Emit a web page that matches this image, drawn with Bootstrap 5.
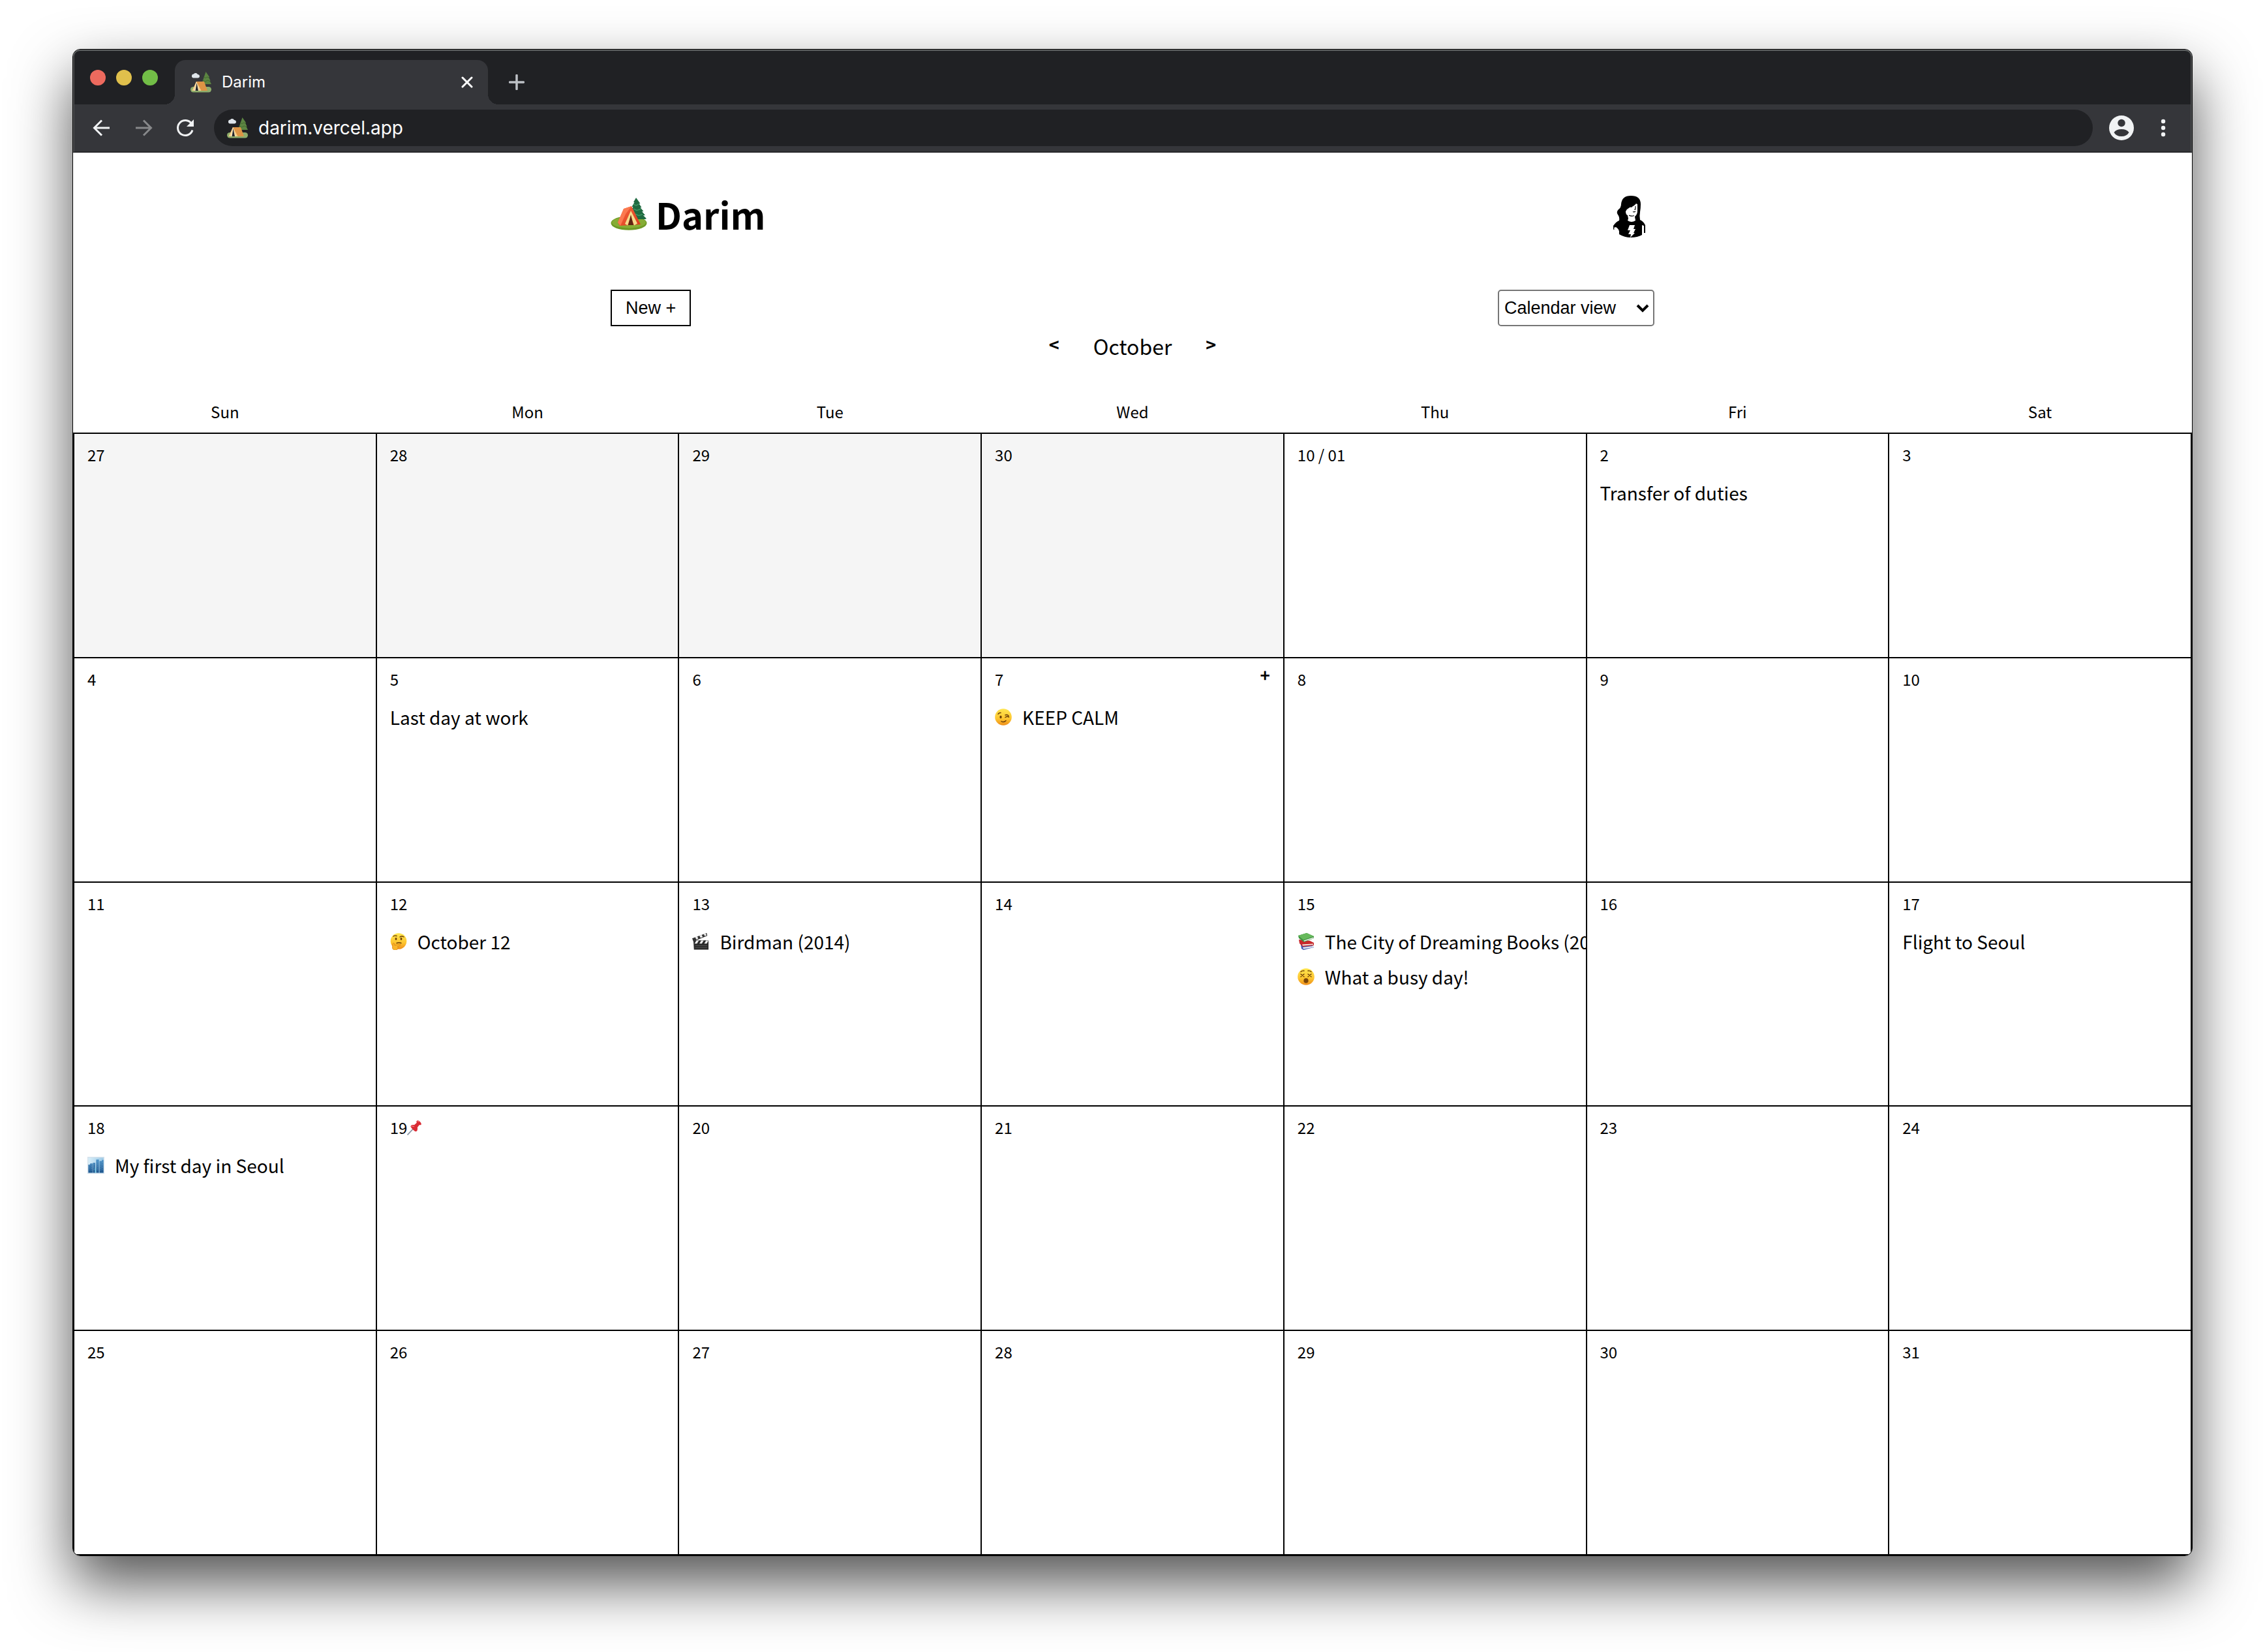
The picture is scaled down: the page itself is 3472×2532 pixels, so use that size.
<!DOCTYPE html>
<html lang="en">
<head>
<meta charset="utf-8">
<meta name="viewport" content="width=device-width, initial-scale=1">
<title>Darim</title>
<link href="https://cdn.jsdelivr.net/npm/bootstrap@5.3.0/dist/css/bootstrap.min.css" rel="stylesheet">
<style>
body{background:#fff;color:#000;font-family:"Noto Sans CJK KR","Noto Sans",sans-serif;padding:75px 111px 147px}
.app-window{border:1px solid #000;border-radius:12px;background:#fff;box-shadow:0 42px 90px rgba(0,0,0,.68)}
.chrome-top{background:#202124;border-radius:11px 11px 0 0;box-shadow:inset 0 2px 0 #5d6061,inset 2px 0 0 #4b4c4e,inset -2px 0 0 #4b4c4e;font-family:Inter,Roboto,sans-serif;color:#fff}
.tab-strip{height:84px;padding:0 26px}
.light{width:24px;height:24px;border-radius:50%}
.light-close{background:#ed6a5e}.light-min{background:#e0c04c}.light-max{background:#72be47}
.lights{gap:16px;padding-bottom:29px}
.site-tab{width:480px;height:68px;margin-left:26px;padding:0 23px 0 24px;border-radius:16px 16px 0 0;background:#35363a;position:relative;font-size:24px;line-height:32px}
.site-tab::before,.site-tab::after{content:"";position:absolute;bottom:0;width:16px;height:16px}
.site-tab::before{left:-16px;background:radial-gradient(circle at 0 0,transparent 16px,#35363a 16px)}
.site-tab::after{right:-16px;background:radial-gradient(circle at 100% 0,transparent 16px,#35363a 16px)}
.bare{border:0;background:none;padding:0;color:inherit;line-height:1;display:flex;align-items:center;justify-content:center}
.new-tab{margin-left:32px;height:68px}
.tool-bar{height:74px;background:#35363a;border-bottom:2px solid #28292c;padding:0 38px 0 26px;border-left:2px solid #4b4c4e;border-right:2px solid #4b4c4e}
.omnibox{height:56px;border-radius:28px;background:#202124;padding-left:20px;gap:16px;margin:0 24px 0 28px}
.omnibox input{background:none;border:0;outline:0;color:#fff;font-size:28px;line-height:40px;height:44px;padding:0}
.nav-tools{gap:32px}
.menu-btn{margin-left:40px}
.page-col{width:1600px;max-width:100%}
.site-head{padding-top:54px}
.site-title{font-size:56px;line-height:80px;gap:13px;font-weight:700;margin:0}
.avatar-btn{margin:8px 10px 0 0}
.controls{padding-top:76px}
.ctl{font-family:"Liberation Sans",Arial,sans-serif;font-size:27px;line-height:32px;height:56px;color:#000}
.btn-new{border:2px solid #000;border-radius:0;padding:0 21px;background:#fff}
.view-pick{width:240px;border:2px solid #767676;border-radius:5px;padding:0 40px 0 8px;background-position:right 6px center;background-size:20px 20px;background-image:url("data:image/svg+xml,%3Csvg xmlns='http://www.w3.org/2000/svg' viewBox='0 0 20 20'%3E%3Cpath d='M2 6l8 8 8-8' fill='none' stroke='%23000' stroke-width='4'/%3E%3C/svg%3E")}
.month-nav{padding-top:6px;gap:48px}
.month-name{font-size:32px;line-height:48px;font-weight:400;margin:0}
.step-btn{font-size:27px;font-weight:700;width:24px;height:42px}
.cal{table-layout:fixed;width:100%;border-collapse:collapse}
.cal th{height:110px;padding:0 0 14px;vertical-align:bottom;text-align:center;font-size:24px;line-height:36px;font-weight:400}
.cal td{border:2px solid #000;padding:14px 0 0 20px;vertical-align:top;overflow:hidden}
.cal td.other{background:#f5f5f5}
.cell-body{min-height:300px}
.day-row{font-size:24px;line-height:36px;padding-right:20px;margin-bottom:13px}
.ev{font-size:28px;line-height:54px;color:#000;text-decoration:none;white-space:nowrap;gap:16px}
.add-btn{font-size:26px;font-weight:700;height:22px}
svg{display:block;flex:none}
</style>
</head>
<body class="d-flex flex-column min-vh-100">
<svg width="0" height="0" class="position-absolute" aria-hidden="true">
<defs>
<linearGradient id="gy" x1="0" y1="0" x2="0" y2="1"><stop offset="0" stop-color="#ffe650"/><stop offset=".6" stop-color="#fdc52f"/><stop offset="1" stop-color="#ee8d1a"/></linearGradient>
<linearGradient id="gt" x1="0" y1="0" x2="1" y2="1"><stop offset="0" stop-color="#f9683f"/><stop offset="1" stop-color="#d93a1c"/></linearGradient>
<linearGradient id="gs" x1="0" y1="0" x2="1" y2="0"><stop offset="0" stop-color="#d8eef9"/><stop offset="1" stop-color="#9cc9e6"/></linearGradient>
<linearGradient id="gb" x1="0" y1="0" x2="0" y2="1"><stop offset="0" stop-color="#4d93c8"/><stop offset="1" stop-color="#1c548c"/></linearGradient>
<symbol id="favicon" viewBox="0 0 32 32">
<rect x="0" y="23" width="32" height="8.500" rx="4.200" fill="#8fae6c"/>
<path d="M23.500 0L17 19h15L29.500 14l1-.5-2.500-5 1-.5z" fill="#5c8542"/><path d="M20 8l3 1.500 3-1.500 3 1.500M18.500 13l4 2 4-2 4 2" stroke="#43692f" fill="none"/>
<path d="M2 6.500a3 3 0 013-3 3.500 3.500 0 016 .5 2.800 2.800 0 013 2.500A2.800 2.800 0 0111.500 9.500h-7A2.500 2.500 0 012 6.500z" fill="#dfe5ea"/>
<path d="M9 15h12l5 14H3z" fill="#de9445"/><path d="M9 15l-6.500 14h14z" fill="#f7d08a"/><path d="M9 15L6 29h7z" fill="#fff0cd"/><path d="M9.500 17l-2 12h4.500z" fill="#26272b"/>
</symbol>
<symbol id="camp" viewBox="0 0 56 50">
<ellipse cx="28" cy="39" rx="27.500" ry="10.800" fill="#6f9a26"/><ellipse cx="28" cy="38" rx="26" ry="8.500" fill="#86ad35"/>
<path d="M39 0l-4 7 1.500 0-4 7 2 0-3.500 6 2 0-3 6v7h23l2-1-5-5 3 0-5-6 2.500 0-5-6 2 0-4-6 2 0z" fill="#1f6a41"/>
<path d="M35 10l4 2 4-2M35 17l5 2.500 6-2M38 25l5 2.500 6-2" stroke="#3f9463" stroke-width="1.500" fill="none"/>
<path d="M20 17l12-4 14 28-32 2-3-5z" fill="url(#gt)"/><path d="M20 17l12-4-9 12-8 18-4-5z" fill="#fb7a50"/>
<path d="M31 20l-9 20 4 2.500 5-14 5 14 5-3z" fill="#f5dc8c"/><path d="M31 26l-4 16h8z" fill="#5f2413"/>
</symbol>
<symbol id="wink" viewBox="0 0 26 26"><circle cx="13" cy="13" r="12.800" fill="url(#gy)"/><g fill="none" stroke="#6b3d07" stroke-width="1.500" stroke-linecap="round"><path d="M5 8.500Q6 6 9 6.500M16 10q3-1.500 5 1M16 13.500q3-2 5.500-.5M10 19.500q3.500 2.500 7-1"/></g><ellipse cx="9" cy="13" rx="1.600" ry="2.300" fill="#6b3d07"/></symbol>
<symbol id="dizzy" viewBox="0 0 26 26"><circle cx="13" cy="13" r="12.800" fill="url(#gy)"/><path d="M5 9l5 4M10 9l-5 4M16 9l5 4M21 9l-5 4M5 5.500q2-2 5-1.500M16 4q3-.5 5 1.500" fill="none" stroke="#6b3d07" stroke-width="1.400" stroke-linecap="round"/><ellipse cx="13" cy="19" rx="3.600" ry="3.800" fill="#7a4508"/></symbol>
<symbol id="think" viewBox="0 0 26 26"><circle cx="13" cy="12.500" r="12.300" fill="url(#gy)"/><g fill="none" stroke="#6b3d07" stroke-width="1.400" stroke-linecap="round"><path d="M5 5q2-1.500 5-.5M15 6q3-2 6 0M10 15.500q4-1.500 7 0"/></g><ellipse cx="9" cy="9" rx="1.400" ry="2" fill="#6b3d07"/><ellipse cx="17" cy="9" rx="1.400" ry="2" fill="#6b3d07"/><path d="M4 17q1-3 2.500-1l.5 3 8-2q2 .5.500 2l-4 1.500q2 4-2 5.500-5 1-6-3z" fill="#f9b52a" stroke="#d98412" stroke-width=".8"/></symbol>
<symbol id="books" viewBox="0 0 26 26"><path d="M5 18l16-1 4 5-16 4-3-2z" fill="#3b5bb5"/><path d="M8 22l16-2v2L9 24.500z" fill="#e8e8ee"/><path d="M2 10l17 2 6 3v4L8 21l-5-5z" fill="#c8282c"/><path d="M7 17.500l17-1v1.500L8 19.500z" fill="#f1e9e2"/><path d="M1 4L14 0l11 5v3L10 14 2 8z" fill="#3d9440"/><path d="M1 4L14 0l11 5L9 10.500z" fill="#67b95c"/><path d="M9.500 11.500L24.500 6.500V8L10 13z" fill="#efefe8"/></symbol>
<symbol id="clap" viewBox="0 0 28 28"><path d="M2 12h25v15.500H3z" fill="#2b2b2b"/><path d="M0 9L24 0l1 4.500L2 14z" fill="#333"/><path d="M5 7l3.500-1.500 1.500 4-3 1.300zM12 4.500l3.500-1.500 2 3.500-3.500 1.500zM19 2l3-1.200 2 3-3 1.200z" fill="#eee"/><path d="M7 12.500h4l-3 5H4zM15 12.500h4l-3 5h-4zM23 12.500h4l-3 5h-4z" fill="#eee"/><path d="M5 21h20M5 24h20" stroke="#555"/></symbol>
<symbol id="city" viewBox="0 0 28 28"><path d="M0 0h28v28H0z" fill="#d5e2ec"/><path d="M1.500 1.500h25v25h-25z" fill="url(#gs)"/><path d="M1.500 13h3v-2h4v15.500h-7zM9 10h4v16.500H9zM14.500 4.500H19v22h-4.500zM20 7h4v-2h2.500v21.500H20z" fill="url(#gb)"/><path d="M12.500 18H14v8.500h-1.500z" fill="#7fd7ee"/><path d="M4 14v9M7 13v9M11 12v10M17 7v16M22 10v12M24.500 9v12" stroke="#8dbfe2" stroke-width=".8" stroke-dasharray="1 1.800"/></symbol>
<symbol id="pin" viewBox="0 0 23 24"><path d="M9 14L0 23.500" stroke="#8b97a5" stroke-width="1.800"/><path d="M15 1q2-2 5 1t2 5q-1 1-3 .5l-3 4q1 5-2 6.500-2 0-5-3t-4-5q1-3 6-2.500l4-3.500q-1-2 0-3z" fill="#d92b34"/><path d="M16 2q1-1 3 .5M6 10q2-1 5 0" stroke="#f5777a" fill="none" stroke-width="1.300"/></symbol>
</defs></svg>

<div class="app-window flex-grow-1 d-flex flex-column overflow-hidden">
<header class="chrome-top">
  <div class="tab-strip d-flex align-items-end">
    <div class="lights d-flex" aria-hidden="true"><span class="light light-close"></span><span class="light light-min"></span><span class="light light-max"></span></div>
    <div class="site-tab d-flex align-items-center">
      <svg width="32" height="32"><use href="#favicon"/></svg>
      <span class="ms-3 flex-grow-1">Darim</span>
      <button class="bare" type="button" aria-label="Close tab"><svg width="18" height="18" viewBox="0 0 18 18"><path d="M2 2l14 14M16 2L2 16" stroke="#fff" stroke-width="3" stroke-linecap="round"/></svg></button>
    </div>
    <button class="bare new-tab" type="button" aria-label="New tab"><svg width="24" height="24" viewBox="0 0 24 24"><path d="M12 1.500v21M1.500 12h21" stroke="#bdc1c6" stroke-width="3.500" stroke-linecap="round"/></svg></button>
  </div>
  <div class="tool-bar d-flex align-items-center">
    <nav class="d-flex nav-tools">
      <button class="bare" type="button" aria-label="Back"><svg width="32" height="32" viewBox="0 0 32 32"><path d="M28 16H6M16 4.500L4.500 16 16 27.500" fill="none" stroke="#f1f3f4" stroke-width="3"/></svg></button>
      <button class="bare" type="button" aria-label="Forward"><svg width="32" height="32" viewBox="0 0 32 32"><path d="M4 16h22M16 4.500L27.500 16 16 27.500" fill="none" stroke="#87888a" stroke-width="3"/></svg></button>
      <button class="bare" type="button" aria-label="Reload"><svg width="32" height="32" viewBox="0 0 32 32"><path d="M25.500 9.500A11.500 11.500 0 1027 19.500" fill="none" stroke="#f1f3f4" stroke-width="3"/><path d="M29 3v11H18z" fill="#f1f3f4"/></svg></button>
    </nav>
    <div class="omnibox d-flex align-items-center flex-grow-1">
      <svg width="32" height="32"><use href="#favicon"/></svg>
      <input class="flex-grow-1" type="text" value="darim.vercel.app" aria-label="Address">
    </div>
    <button class="bare" type="button" aria-label="Profile"><svg width="40" height="40" viewBox="0 0 40 40"><circle cx="20" cy="20" r="19" fill="#f1f3f4"/><circle cx="20" cy="12.500" r="5.700" fill="#35363a"/><path d="M8.500 27Q12 22 20 22t11.500 5Q28 33 20 33T8.500 27z" fill="#35363a"/></svg></button>
    <button class="bare menu-btn" type="button" aria-label="Menu"><svg width="8" height="28" viewBox="0 0 8 28" fill="#f1f3f4"><circle cx="4" cy="4" r="3.200"/><circle cx="4" cy="14" r="3.200"/><circle cx="4" cy="24" r="3.200"/></svg></button>
  </div>
</header>
<main class="flex-grow-1 d-flex flex-column">
  <div class="page-col mx-auto">
    <div class="site-head d-flex justify-content-between align-items-center">
      <h1 class="site-title d-flex align-items-center"><svg width="56" height="50"><use href="#camp"/></svg><span>Darim</span></h1>
      <button class="bare avatar-btn" type="button" aria-label="Profile menu">
        <svg width="56" height="66" viewBox="0 0 56 66"><path d="M30 1Q16 1 15 14q0 5-4 8-4 4-1 8 3 4 2 9-5 2-9 8v6l2-1 7 4v4q8 5 18 5t17-4V46l3 1v11h2V46q-3-6-8-8-1-7 0-12 1-6 1-12Q45 1 30 1z" fill="#000"/><path d="M38 13q-4 5-10 6-4 2-6 6 0 5 3 6l1 5-1 3q6 4 12 0l-1-6q4-3 4-9V14z" fill="#fff"/><path d="M30 18h2M37 17v5h-2M33 25.500q2 1 4-.5M27 31q4 2 8 .5" stroke="#000" stroke-width="1.100" fill="none"/><path d="M4 50l3-1q5 3 5 8-5-2-8-6z" fill="#fff"/><path d="M28 46h8l-2 6h3l-3 6h2l-7 7 1-5h-4l3-6h-4z" fill="#fff"/></svg>
      </button>
    </div>
    <div class="controls d-flex justify-content-between">
      <button class="ctl btn-new" type="button">New +</button>
      <select class="ctl form-select view-pick" aria-label="View"><option>Calendar view</option><option>List view</option></select>
    </div>
    <div class="month-nav d-flex justify-content-center">
      <button class="bare step-btn" type="button">&lt;</button>
      <h2 class="month-name">October</h2>
      <button class="bare step-btn" type="button">&gt;</button>
    </div>
  </div>
  <table class="cal flex-grow-1">
    <thead><tr><th scope="col">Sun</th><th scope="col">Mon</th><th scope="col">Tue</th><th scope="col">Wed</th><th scope="col">Thu</th><th scope="col">Fri</th><th scope="col">Sat</th></tr></thead>
    <tbody id="weeks"></tbody>
  </table>
</main>
</div>
<script src="https://cdn.jsdelivr.net/npm/bootstrap@5.3.0/dist/js/bootstrap.bundle.min.js"></script>
<script>
const days=['27','28','29','30','10 / 01'];
for(let d=2;d<=31;d++)days.push(String(d));
const events={5:[['','Transfer of duties']],8:[['','Last day at work']],10:[['wink','KEEP CALM']],15:[['think','October 12']],16:[['clap','Birdman (2014)']],18:[['books','The City of Dreaming Books (2004)'],['dizzy','What a busy day!']],20:[['','Flight to Seoul']],21:[['city','My first day in Seoul']]};
const icon=(n,s)=>n?`<svg width="${s}" height="${s}" aria-hidden="true"><use href="#${n}"/></svg>`:'';
let html='';
for(let w=0;w<5;w++){
  html+='<tr>';
  for(let c=0;c<7;c++){
    const i=w*7+c;
    html+=`<td class="${i<4?'other':''}"><div class="cell-body"><div class="day-row d-flex"><span class="d-flex align-items-center"><time>${days[i]}</time>${i===22?icon('pin',23):''}</span>${i===10?'<button class="bare add-btn ms-auto" type="button" aria-label="Add entry">+</button>':''}</div>`;
    for(const [n,t] of events[i]||[])html+=`<a class="ev d-flex align-items-center" href="#">${icon(n,26)}<span>${t}</span></a>`;
    html+='</div></td>';
  }
  html+='</tr>';
}
document.getElementById('weeks').innerHTML=html;
</script>
</body>
</html>
